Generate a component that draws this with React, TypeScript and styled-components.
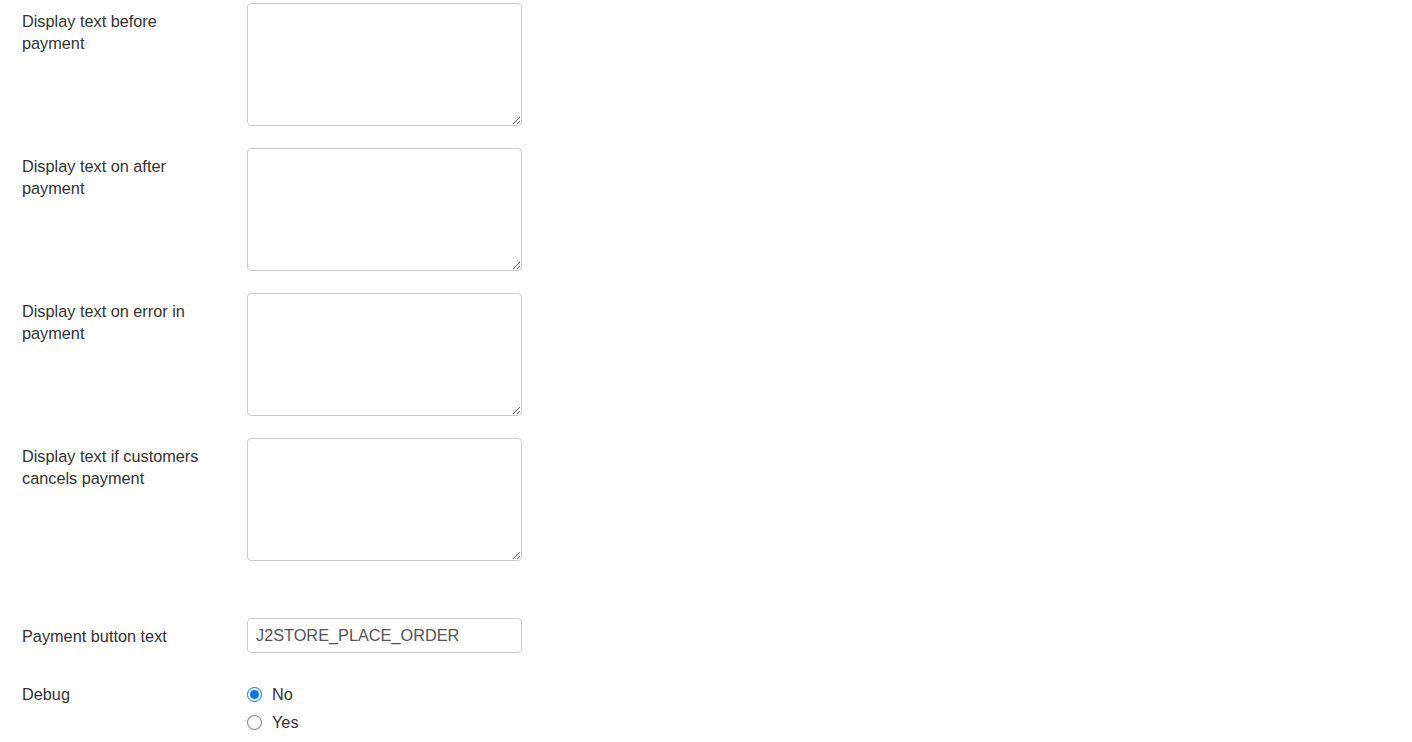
import React, { useState } from "react";
import styled, { createGlobalStyle } from "styled-components";

const GlobalStyle = createGlobalStyle`
  html, body {
    margin: 0;
    padding: 0;
    background: #fff;
  }
  body {
    font-family: "Liberation Sans", Arial, sans-serif;
    color: #333;
  }
`;

const Form = styled.div`
  padding: 3px 0 0 22px;
  display: flex;
  flex-direction: column;
`;

const Row = styled.div<{ $gap: number; $center?: boolean }>`
  display: flex;
  align-items: ${(p) => (p.$center ? "center" : "flex-start")};
  margin-bottom: ${(p) => p.$gap}px;
`;

const Label = styled.label<{ $pad: number }>`
  width: 225px;
  flex-shrink: 0;
  padding-top: ${(p) => p.$pad}px;
  padding-right: 40px;
  box-sizing: border-box;
  font-size: 16.3px;
  line-height: 22px;
  color: #333;
`;

const TextArea = styled.textarea`
  width: 275px;
  height: 123px;
  box-sizing: border-box;
  border: 1px solid #ccc;
  border-radius: 4px;
  margin: 0;
  padding: 6px 8px;
  font-family: inherit;
  font-size: 16px;
  resize: vertical;
  outline: none;
`;

const TextInput = styled.input`
  width: 275px;
  height: 35px;
  box-sizing: border-box;
  border: 1px solid #ccc;
  border-radius: 4px;
  margin: 0;
  padding: 0 8px;
  font-family: inherit;
  font-size: 16.3px;
  color: #555;
  outline: none;
`;

const RadioList = styled.div`
  display: flex;
  flex-direction: column;
  gap: 6px;
`;

const RadioOption = styled.label`
  display: flex;
  align-items: center;
  gap: 10px;
  font-size: 16.3px;
  line-height: 22px;
  color: #333;
  cursor: pointer;

  input {
    margin: 0;
    width: 15px;
    height: 15px;
    accent-color: #0075ff;
  }
`;

const areas = [
  "Display text before payment",
  "Display text on after payment",
  "Display text on error in payment",
  "Display text if customers cancels payment",
];

export default function App() {
  const [debug, setDebug] = useState("no");
  const [buttonText, setButtonText] = useState("J2STORE_PLACE_ORDER");

  return (
    <>
      <GlobalStyle />
      <Form>
        {areas.map((label, i) => (
          <Row key={label} $gap={i === areas.length - 1 ? 57 : 22}>
            <Label $pad={7}>{label}</Label>
            <TextArea />
          </Row>
        ))}
        <Row $gap={30} $center>
          <Label $pad={0}>Payment button text</Label>
          <TextInput
            value={buttonText}
            onChange={(e) => setButtonText(e.target.value)}
          />
        </Row>
        <Row $gap={0}>
          <Label $pad={0}>Debug</Label>
          <RadioList>
            <RadioOption>
              <input
                type="radio"
                name="debug"
                checked={debug === "no"}
                onChange={() => setDebug("no")}
              />
              No
            </RadioOption>
            <RadioOption>
              <input
                type="radio"
                name="debug"
                checked={debug === "yes"}
                onChange={() => setDebug("yes")}
              />
              Yes
            </RadioOption>
          </RadioList>
        </Row>
      </Form>
    </>
  );
}
